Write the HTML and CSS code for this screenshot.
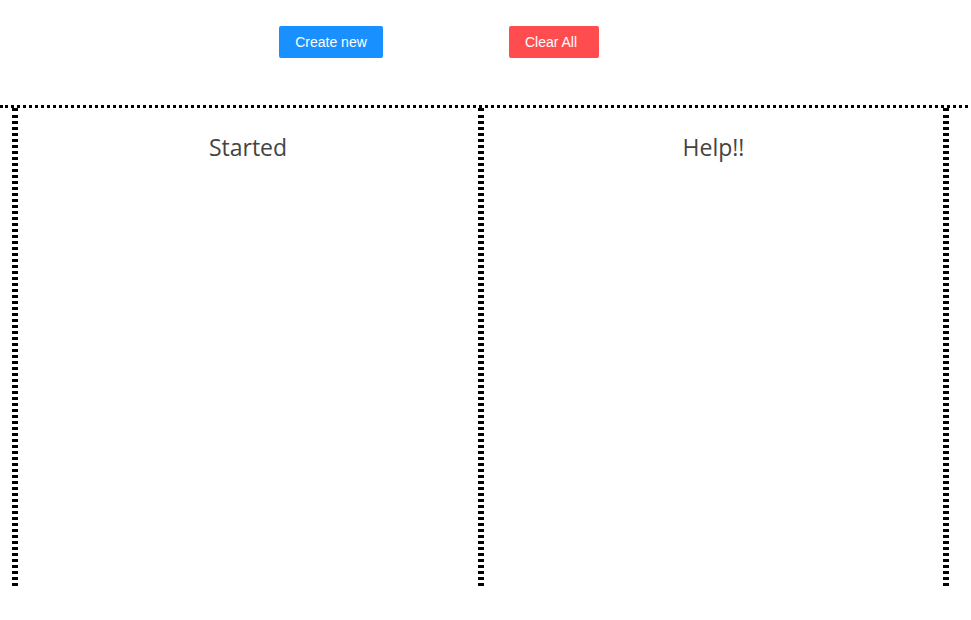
FILE: index.html
```html
<!DOCTYPE html>
<html>
<head>
<meta charset="utf-8">
<link rel="stylesheet" href="styles.css">
</head>
<body>
<div class="toolbar">
  <button class="btn btn-primary">Create new</button>
  <button class="btn btn-danger">Clear All</button>
</div>
<div class="divider"></div>
<div class="board">
  <div class="column"><h2 class="column-title">Started</h2></div>
  <div class="column"><h2 class="column-title">Help!!</h2></div>
</div>
</body>
</html>
```
FILE: styles.css
```css
html, body {
  margin: 0;
  padding: 0;
  background: #fff;
}
body {
  font-family: "Liberation Sans", Arial, sans-serif;
}
.toolbar {
  height: 105px;
  display: flex;
  align-items: flex-start;
  padding: 26px 0 0 279px;
  box-sizing: border-box;
  gap: 126px;
}
.btn {
  height: 32px;
  border: none;
  border-radius: 2px;
  color: #fff;
  font-family: "Liberation Sans", Arial, sans-serif;
  font-size: 14px;
  padding: 0 16px;
  cursor: pointer;
}
.btn-primary {
  background: #1890ff;
  width: 104px;
}
.btn-danger {
  background: #ff4d4f;
  width: 90px;
  padding: 0 19px 0 13px;
}
.divider {
  border-top: 3px dotted #000;
  width: 968px;
}
.board {
  display: flex;
  margin-left: 12px;
  width: 937px;
  height: 478px;
  border-left: 3px dotted #000;
  border-right: 3px dotted #000;
  box-sizing: border-box;
}
.column {
  border-left: 3px dotted #000;
  border-right: 3px dotted #000;
  box-sizing: border-box;
}
.column:first-child {
  width: 466px;
}
.column:last-child {
  width: 465px;
}
.column-title {
  margin: 0;
  padding-top: 24px;
  text-align: center;
  font-family: "Open Sans", sans-serif;
  font-weight: 400;
  font-size: 23px;
  line-height: 30px;
  color: #444;
}
```
